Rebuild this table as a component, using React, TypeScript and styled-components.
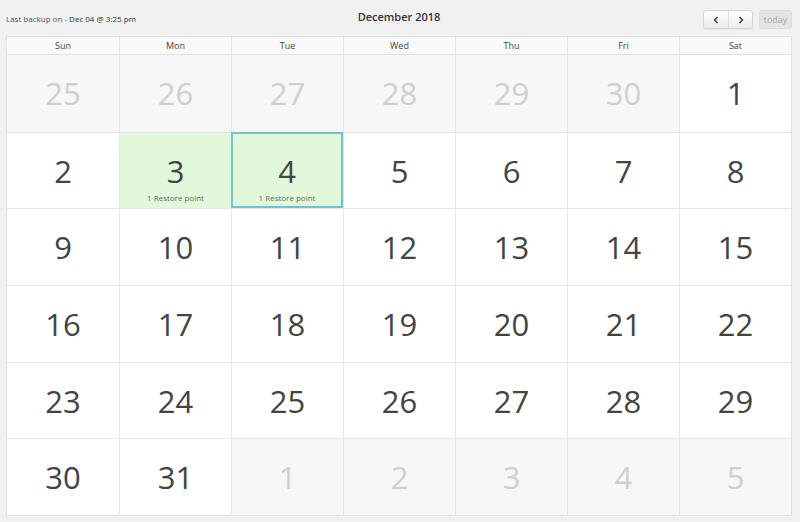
import styled, { createGlobalStyle } from "styled-components";

const GlobalStyle = createGlobalStyle`
  html, body {
    margin: 0;
    padding: 0;
    background: #f1f1f1;
    font-family: "Open Sans", "Liberation Sans", sans-serif;
  }
`;

type Day = { n: number; muted?: boolean; restore?: number; today?: boolean };

const dayNames = ["Sun", "Mon", "Tue", "Wed", "Thu", "Fri", "Sat"];

function buildDays(): Day[] {
  const days: Day[] = [];
  for (let n = 25; n <= 30; n++) days.push({ n, muted: true });
  for (let n = 1; n <= 31; n++) {
    if (n === 3) days.push({ n, restore: 1 });
    else if (n === 4) days.push({ n, restore: 1, today: true });
    else days.push({ n });
  }
  for (let n = 1; n <= 5; n++) days.push({ n, muted: true });
  return days;
}

export default function App() {
  const days = buildDays();
  return (
    <>
      <GlobalStyle />
      <Page>
        <Toolbar>
          <Backup>
            Last backup on - <strong>Dec 04 @ 3:25 pm</strong>
          </Backup>
          <Title>December 2018</Title>
          <Controls>
            <NavGroup>
              <NavButton aria-label="prev">
                <Chevron dir="left" />
              </NavButton>
              <NavButton aria-label="next">
                <Chevron dir="right" />
              </NavButton>
            </NavGroup>
            <TodayButton disabled>today</TodayButton>
          </Controls>
        </Toolbar>
        <Calendar>
          <HeadRow>
            {dayNames.map((d) => (
              <HeadCell key={d}>{d}</HeadCell>
            ))}
          </HeadRow>
          <Body>
            {days.map((d, i) => (
              <Cell
                key={i}
                $muted={d.muted}
                $restore={!!d.restore}
                $today={d.today}
              >
                <Num $muted={d.muted}>{d.n}</Num>
                {d.restore ? <Restore>{d.restore} Restore point</Restore> : null}
              </Cell>
            ))}
          </Body>
        </Calendar>
      </Page>
    </>
  );
}

function Chevron({ dir }: { dir: "left" | "right" }) {
  return (
    <svg width="8" height="8" viewBox="0 0 8 8">
      <path
        d={dir === "left" ? "M5.5 1 L2.5 4 L5.5 7" : "M2.5 1 L5.5 4 L2.5 7"}
        fill="none"
        stroke="#333"
        strokeWidth="1.4"
      />
    </svg>
  );
}

const Page = styled.div`
  width: 800px;
  height: 522px;
  padding: 0 8px 0 6px;
  box-sizing: border-box;
`;

const Toolbar = styled.div`
  height: 36px;
  display: grid;
  grid-template-columns: 1fr auto 1fr;
  align-items: center;
  padding-top: 1px;
  box-sizing: border-box;
`;

const Backup = styled.div`
  font-size: 8px;
  color: #555;
  strong {
    font-weight: 400;
    color: #333;
  }
`;

const Title = styled.div`
  font-size: 11px;
  font-weight: 600;
  color: #333;
  margin-top: -4px;
`;

const Controls = styled.div`
  display: flex;
  justify-content: flex-end;
  gap: 6px;
  margin-top: 2px;
`;

const NavGroup = styled.div`
  display: flex;
  border: 1px solid #d6d6d6;
  border-radius: 3px;
  background: linear-gradient(#ffffff, #ebebeb);
  overflow: hidden;
  box-shadow: 0 1px 1px rgba(0, 0, 0, 0.05);
`;

const NavButton = styled.button`
  width: 24px;
  height: 17px;
  padding: 0;
  border: none;
  background: transparent;
  display: flex;
  align-items: center;
  justify-content: center;
  & + & {
    border-left: 1px solid #dcdcdc;
  }
`;

const TodayButton = styled.button`
  height: 19px;
  width: 33px;
  padding: 0;
  font-family: inherit;
  font-size: 9px;
  color: #a8a8a8;
  background: #e4e4e4;
  border: 1px solid #dcdcdc;
  border-radius: 3px;
`;

const Calendar = styled.div`
  width: 786px;
  border: 1px solid #e2e2e2;
  background: #fff;
  box-sizing: border-box;
`;

const HeadRow = styled.div`
  display: grid;
  grid-template-columns: repeat(7, 1fr);
  height: 17px;
  background: #fafafa;
  border-bottom: 1px solid #e2e2e2;
`;

const HeadCell = styled.div`
  font-size: 9px;
  color: #444;
  display: flex;
  align-items: center;
  justify-content: center;
  & + & {
    border-left: 1px solid #e6e6e6;
  }
`;

const Body = styled.div`
  display: grid;
  grid-template-columns: repeat(7, 1fr);
  grid-auto-rows: 76.7px;
`;

const Cell = styled.div<{ $muted?: boolean; $restore?: boolean; $today?: boolean }>`
  display: flex;
  flex-direction: column;
  align-items: center;
  padding-top: 20px;
  box-sizing: border-box;
  border-left: 1px solid #e6e6e6;
  border-top: 1px solid #e6e6e6;
  background: ${(p) => (p.$restore ? "#e2f8db" : p.$muted ? "#f7f7f7" : "#ffffff")};
  &:nth-child(7n + 1) {
    border-left: none;
  }
  &:nth-child(-n + 7) {
    border-top: none;
  }
  ${(p) =>
    p.$today &&
    `
    border: 2px solid #6ec4d4 !important;
    padding-top: 19px;
  `}
`;

const Num = styled.div<{ $muted?: boolean }>`
  font-size: 31px;
  line-height: 36px;
  color: ${(p) => (p.$muted ? "#cfcfcf" : "#444")};
`;

const Restore = styled.div`
  font-size: 8px;
  line-height: 12px;
  margin-top: 3px;
  color: #5e6d5c;
`;
